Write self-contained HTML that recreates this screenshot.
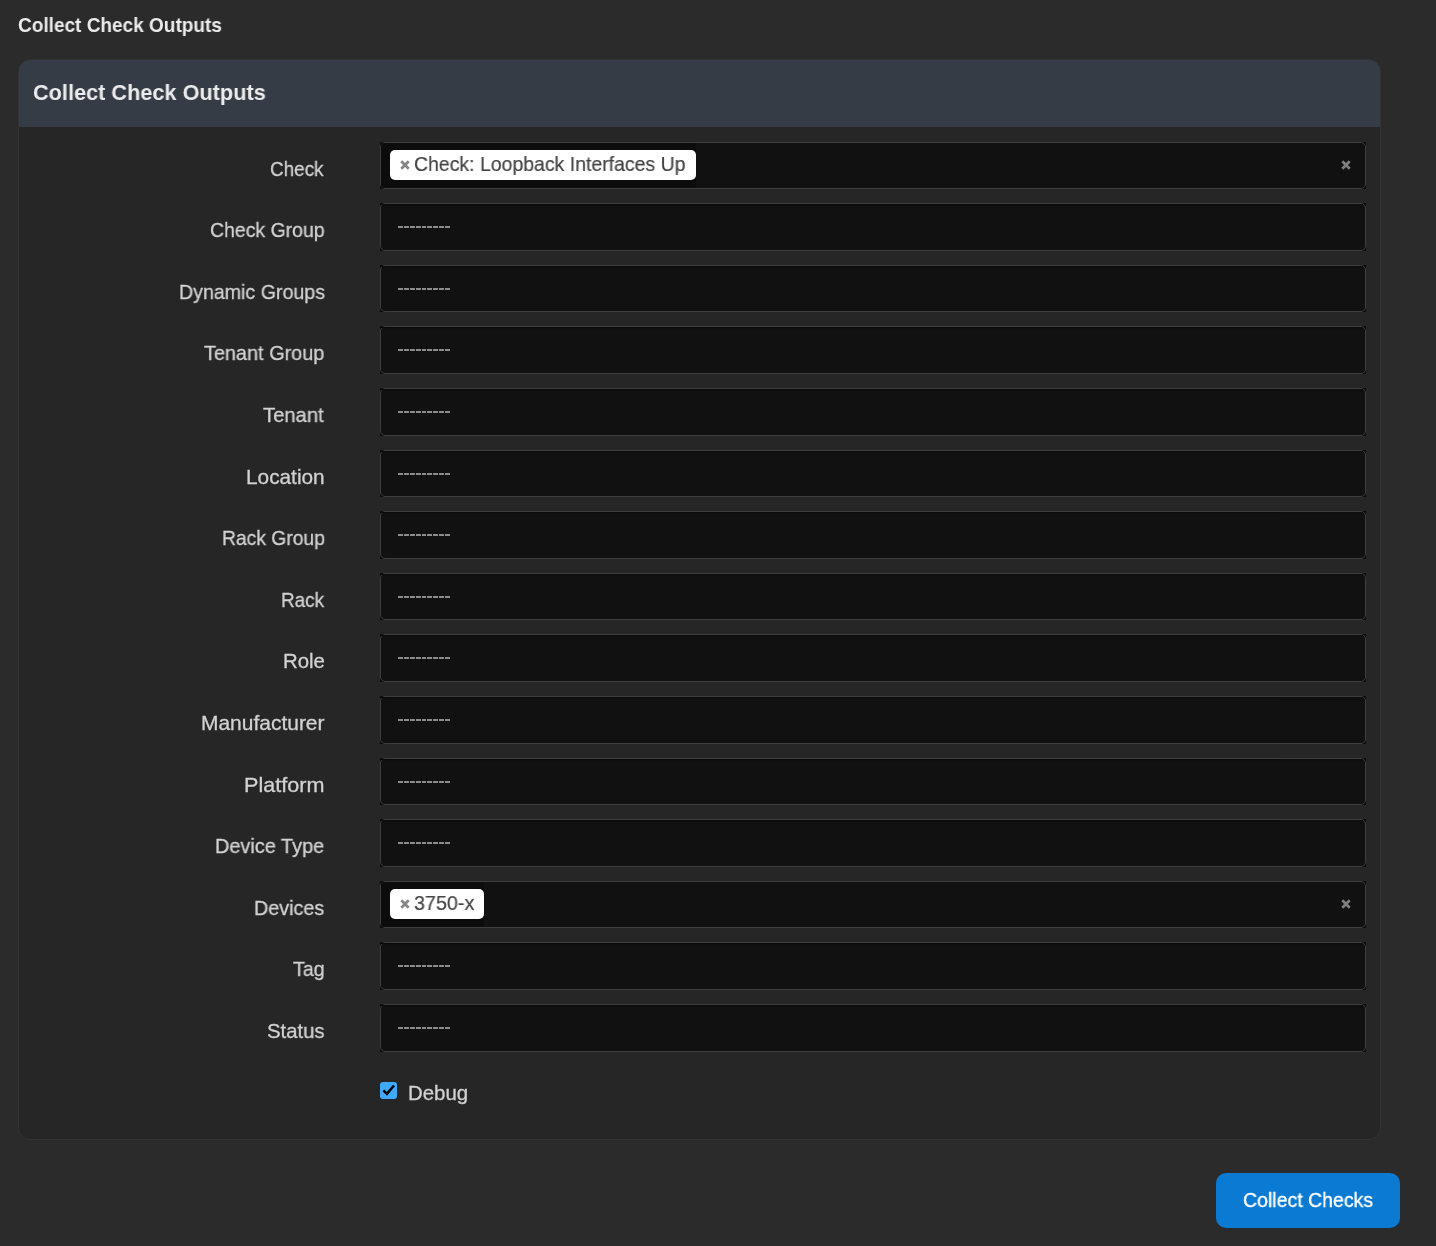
<!DOCTYPE html>
<html><head><meta charset="utf-8"><style>
html,body{margin:0;padding:0}
body{width:1436px;height:1246px;overflow:hidden;background:#2b2b2b;position:relative;font-family:"Liberation Sans",sans-serif}
.t{position:absolute;white-space:nowrap;will-change:transform}
.panel{position:absolute;left:18px;top:59px;width:1361px;height:1079px;background:#262626;border:1px solid #333;border-radius:12px}
.phead{position:absolute;left:0;top:0;right:0;height:67px;background:#353c45;border-radius:11px 11px 0 0}
.inp{position:absolute;left:380px;width:986px;height:47px;background:#0c0c0c}
.inp::before{content:"";position:absolute;inset:0;border:1px solid #3e3e3e;border-radius:5px;background:#111}
.shd{position:absolute;left:3px;right:3px;top:1px;height:3px;background:linear-gradient(#0d0d0d,#111)}.shd::before{content:'';position:absolute;left:-2px;top:0;width:899px;height:1px;background:#0b0b0b}
.ph{position:absolute;left:18px;top:23px;width:53px;height:2px;background:repeating-linear-gradient(90deg,#8c8c8c 0 4.9px,transparent 4.9px 5.9px)}
.ul{position:absolute;left:1px;top:1px;bottom:1px;background:#0c0c0c;border-radius:3px 0 0 3px}
.pill{position:absolute;left:10px;top:8px;height:30px;background:#fff;border-radius:5px}
.px{position:absolute;left:19.5px;top:18px}
.clr{position:absolute;left:960.5px;top:18px}
.debug{position:absolute;left:380px;top:1082px;width:17px;height:17px;background:#3fa9fb;border-radius:3px}
.btn{position:absolute;left:1216px;top:1173px;width:184px;height:55px;background:#0a7ad2;border-radius:10px}
</style></head><body>
<div class="t" style="left:17.81px;transform-origin:0 50%;top:15.76px;font-size:19.3px;line-height:19.3px;font-weight:bold;color:#ececec;transform:scaleX(0.9863414634146341);">Collect Check Outputs</div>
<div class="panel"><div class="phead"></div></div>
<div class="t" style="left:32.74px;transform-origin:0 50%;top:82.47px;font-size:22.6px;line-height:22.6px;font-weight:bold;color:#ececec;transform:scaleX(0.9605809128630706);">Collect Check Outputs</div>
<div class="t" style="left:270.27px;transform-origin:0 50%;top:158.73px;font-size:20.4px;line-height:20.4px;font-weight:normal;color:#d2d2d2;transform:scaleX(0.9263157894736844);-webkit-text-stroke:0.3px #d2d2d2;">Check</div><div class="inp" style="top:142px;height:47px"><div class="ul" style="width:315px"></div><div class="pill" style="width:306px"></div><svg class="px" width="10" height="10" viewBox="0 0 10 10"><path d="M1.3 1.3L8.7 8.7M8.7 1.3L1.3 8.7" stroke="#858585" stroke-width="2.7"/></svg><svg class="clr" width="10" height="10" viewBox="0 0 10 10"><path d="M1.3 1.3L8.7 8.7M8.7 1.3L1.3 8.7" stroke="#7f7f7f" stroke-width="2.7"/></svg></div><div class="t" style="left:414.05px;transform-origin:0 50%;top:153.93px;font-size:20.4px;line-height:20.4px;font-weight:normal;color:#444;transform:scaleX(0.9540636042402827);-webkit-text-stroke:0.2px #444;">Check: Loopback Interfaces Up</div><div class="t" style="left:210.45px;transform-origin:0 50%;top:219.73px;font-size:20.4px;line-height:20.4px;font-weight:normal;color:#d2d2d2;transform:scaleX(0.9542372881355932);-webkit-text-stroke:0.3px #d2d2d2;">Check Group</div><div class="inp" style="top:203px;height:48px"><div class="shd"></div><span class="ph"></span></div><div class="t" style="left:178.73px;transform-origin:0 50%;top:281.73px;font-size:20.4px;line-height:20.4px;font-weight:normal;color:#d2d2d2;transform:scaleX(0.9614093959731542);-webkit-text-stroke:0.3px #d2d2d2;">Dynamic Groups</div><div class="inp" style="top:265px;height:47px"><div class="shd"></div><span class="ph"></span></div><div class="t" style="left:203.80px;transform-origin:0 50%;top:342.73px;font-size:20.4px;line-height:20.4px;font-weight:normal;color:#d2d2d2;transform:scaleX(0.9731707317073169);-webkit-text-stroke:0.3px #d2d2d2;">Tenant Group</div><div class="inp" style="top:326px;height:48px"><div class="shd"></div><span class="ph"></span></div><div class="t" style="left:263.30px;transform-origin:0 50%;top:404.73px;font-size:20.4px;line-height:20.4px;font-weight:normal;color:#d2d2d2;transform:scaleX(0.9918032786885246);-webkit-text-stroke:0.3px #d2d2d2;">Tenant</div><div class="inp" style="top:388px;height:48px"><div class="shd"></div><span class="ph"></span></div><div class="t" style="left:246.26px;transform-origin:0 50%;top:466.73px;font-size:20.4px;line-height:20.4px;font-weight:normal;color:#d2d2d2;transform:scaleX(1.0202702702702702);-webkit-text-stroke:0.3px #d2d2d2;">Location</div><div class="inp" style="top:450px;height:47px"><div class="shd"></div><span class="ph"></span></div><div class="t" style="left:221.61px;transform-origin:0 50%;top:527.73px;font-size:20.4px;line-height:20.4px;font-weight:normal;color:#d2d2d2;transform:scaleX(0.9462264150943397);-webkit-text-stroke:0.3px #d2d2d2;">Rack Group</div><div class="inp" style="top:511px;height:48px"><div class="shd"></div><span class="ph"></span></div><div class="t" style="left:281.35px;transform-origin:0 50%;top:589.73px;font-size:20.4px;line-height:20.4px;font-weight:normal;color:#d2d2d2;transform:scaleX(0.9272727272727276);-webkit-text-stroke:0.3px #d2d2d2;">Rack</div><div class="inp" style="top:573px;height:47px"><div class="shd"></div><span class="ph"></span></div><div class="t" style="left:283.01px;transform-origin:0 50%;top:650.73px;font-size:20.4px;line-height:20.4px;font-weight:normal;color:#d2d2d2;transform:scaleX(0.9948717948717951);-webkit-text-stroke:0.3px #d2d2d2;">Role</div><div class="inp" style="top:634px;height:48px"><div class="shd"></div><span class="ph"></span></div><div class="t" style="left:200.64px;transform-origin:0 50%;top:712.73px;font-size:20.4px;line-height:20.4px;font-weight:normal;color:#d2d2d2;transform:scaleX(1.0279661016949153);-webkit-text-stroke:0.3px #d2d2d2;">Manufacturer</div><div class="inp" style="top:696px;height:48px"><div class="shd"></div><span class="ph"></span></div><div class="t" style="left:244.38px;transform-origin:0 50%;top:774.73px;font-size:20.4px;line-height:20.4px;font-weight:normal;color:#d2d2d2;transform:scaleX(1.0589041095890412);-webkit-text-stroke:0.3px #d2d2d2;">Platform</div><div class="inp" style="top:758px;height:47px"><div class="shd"></div><span class="ph"></span></div><div class="t" style="left:215.45px;transform-origin:0 50%;top:835.73px;font-size:20.4px;line-height:20.4px;font-weight:normal;color:#d2d2d2;transform:scaleX(0.9761467889908257);-webkit-text-stroke:0.3px #d2d2d2;">Device Type</div><div class="inp" style="top:819px;height:48px"><div class="shd"></div><span class="ph"></span></div><div class="t" style="left:254.26px;transform-origin:0 50%;top:897.73px;font-size:20.4px;line-height:20.4px;font-weight:normal;color:#d2d2d2;transform:scaleX(0.9685714285714287);-webkit-text-stroke:0.3px #d2d2d2;">Devices</div><div class="inp" style="top:881px;height:47px"><div class="ul" style="width:103px"></div><div class="pill" style="width:94px"></div><svg class="px" width="10" height="10" viewBox="0 0 10 10"><path d="M1.3 1.3L8.7 8.7M8.7 1.3L1.3 8.7" stroke="#858585" stroke-width="2.7"/></svg><svg class="clr" width="10" height="10" viewBox="0 0 10 10"><path d="M1.3 1.3L8.7 8.7M8.7 1.3L1.3 8.7" stroke="#7f7f7f" stroke-width="2.7"/></svg></div><div class="t" style="left:414.03px;transform-origin:0 50%;top:892.93px;font-size:20.4px;line-height:20.4px;font-weight:normal;color:#444;transform:scaleX(0.9672131147540983);-webkit-text-stroke:0.2px #444;">3750-x</div><div class="t" style="left:293.00px;transform-origin:0 50%;top:958.73px;font-size:20.4px;line-height:20.4px;font-weight:normal;color:#d2d2d2;transform:scaleX(0.9625000000000004);-webkit-text-stroke:0.3px #d2d2d2;">Tag</div><div class="inp" style="top:942px;height:48px"><div class="shd"></div><span class="ph"></span></div><div class="t" style="left:267.00px;transform-origin:0 50%;top:1020.73px;font-size:20.4px;line-height:20.4px;font-weight:normal;color:#d2d2d2;transform:scaleX(0.9964285714285717);-webkit-text-stroke:0.3px #d2d2d2;">Status</div><div class="inp" style="top:1004px;height:48px"><div class="shd"></div><span class="ph"></span></div>
<div class="debug"><svg width="17" height="17" viewBox="0 0 17 17"><path d="M3.4 8.4 L6.9 11.9 L14 3.5" stroke="#000" stroke-width="2.6" fill="none"/></svg></div>
<div class="t" style="left:407.51px;transform-origin:0 50%;top:1082.93px;font-size:20.4px;line-height:20.4px;font-weight:normal;color:#d2d2d2;transform:scaleX(0.9964912280701756);-webkit-text-stroke:0.3px #d2d2d2;">Debug</div>
<div class="btn"></div>
<div class="t" style="left:1242.84px;transform-origin:0 50%;top:1189.83px;font-size:20.4px;line-height:20.4px;font-weight:normal;color:#fff;transform:scaleX(0.9567164179104481);-webkit-text-stroke:0.35px #fff;">Collect Checks</div>
</body></html>
